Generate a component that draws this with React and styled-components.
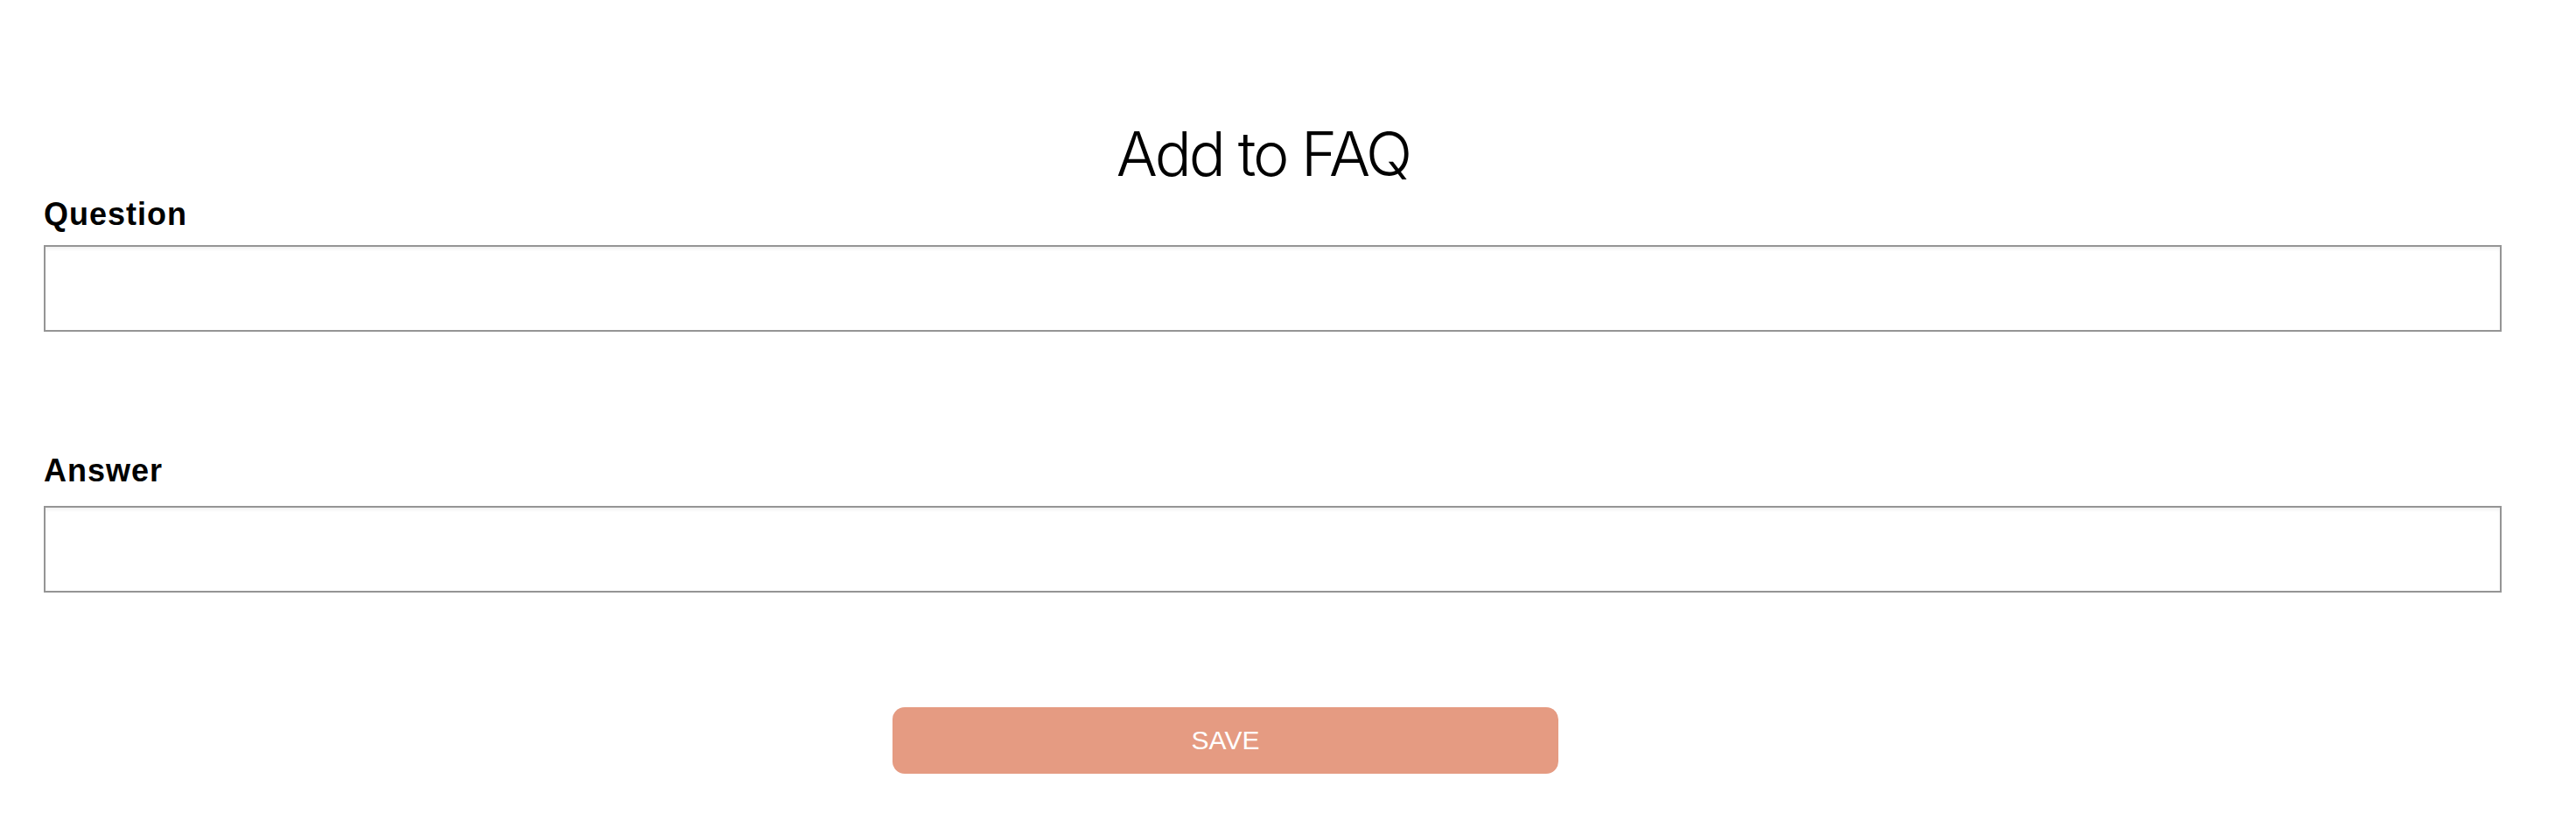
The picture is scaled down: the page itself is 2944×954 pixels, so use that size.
import styled, { createGlobalStyle } from "styled-components";

const GlobalStyle = createGlobalStyle`
  html, body {
    margin: 0;
    padding: 0;
    background: #ffffff;
  }
  body {
    font-family: "Liberation Sans", Arial, sans-serif;
  }
`;

const Page = styled.div`
  width: 2944px;
  height: 954px;
  box-sizing: border-box;
  padding: 141px 85px 0 50px;
  background: #ffffff;
`;

const Form = styled.form`
  display: flex;
  flex-direction: column;
`;

const Title = styled.h1`
  margin: 0 0 16px;
  padding-right: 22px;
  font-family: Inter, "Liberation Sans", sans-serif;
  font-weight: 300;
  font-size: 70px;
  line-height: 70px;
  letter-spacing: -3px;
  color: #000000;
  text-align: center;
`;

const Field = styled.div`
  display: flex;
  flex-direction: column;
  margin-top: ${(p) => p.top || 0}px;
`;

const Label = styled.label`
  font-family: "Liberation Sans", Arial, sans-serif;
  font-weight: 700;
  font-size: 36px;
  line-height: 35px;
  letter-spacing: 1px;
  color: #000000;
  margin-bottom: ${(p) => p.gap}px;
`;

const Input = styled.input`
  display: block;
  box-sizing: border-box;
  width: 100%;
  height: 99px;
  margin: 0;
  padding: 0 16px;
  border: 2px solid #959595;
  border-radius: 0;
  box-shadow: inset 0 3px 4px -1px rgba(0, 0, 0, 0.07);
  font-family: "Liberation Sans", Arial, sans-serif;
  font-size: 30px;
  outline: none;
`;

const ButtonRow = styled.div`
  display: flex;
  justify-content: center;
  padding-right: 108px;
  margin-top: 131px;
`;

const SaveButton = styled.button`
  width: 761px;
  height: 76px;
  border: none;
  border-radius: 14px;
  background: #e59b82;
  color: #ffffff;
  font-family: "Liberation Sans", Arial, sans-serif;
  font-size: 30px;
  line-height: 76px;
  padding: 0;
  cursor: pointer;
`;

const fields = [
  { name: "question", label: "Question", top: 0, gap: 18 },
  { name: "answer", label: "Answer", top: 141, gap: 23 },
];

const App = () => {
  return (
    <>
      <GlobalStyle />
      <Page>
        <Form onSubmit={(e) => e.preventDefault()}>
          <Title>Add to FAQ</Title>
          {fields.map((f) => (
            <Field key={f.name} top={f.top}>
              <Label htmlFor={f.name} gap={f.gap}>
                {f.label}
              </Label>
              <Input id={f.name} name={f.name} type="text" />
            </Field>
          ))}
          <ButtonRow>
            <SaveButton type="submit">SAVE</SaveButton>
          </ButtonRow>
        </Form>
      </Page>
    </>
  );
};

export default App;
